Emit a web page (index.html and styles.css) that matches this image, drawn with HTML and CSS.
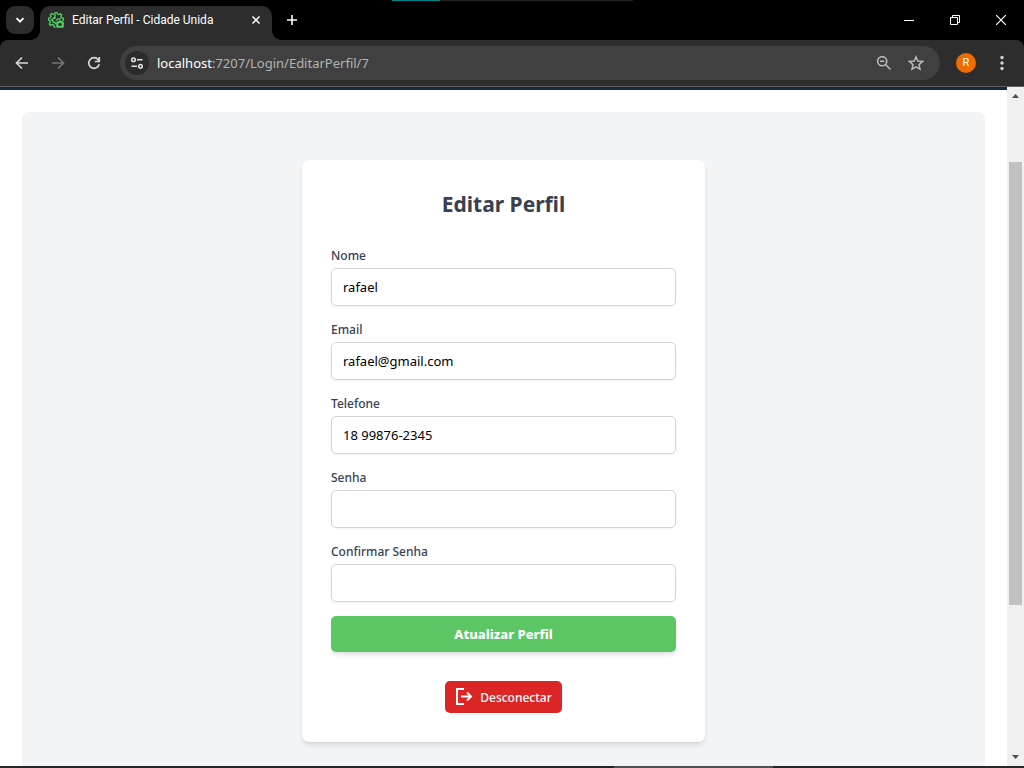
FILE: index.html
```html
<!DOCTYPE html>
<html lang="pt-BR">
<head>
<meta charset="utf-8">
<meta name="viewport" content="width=device-width, initial-scale=1">
<title>Editar Perfil - Cidade Unida</title>
<link rel="stylesheet" href="styles.css">
</head>
<body>
<div class="browser">
  <div class="edge-strip"></div>
  <header class="tabbar">
    <button class="tab-search" type="button" aria-label="Pesquisar guias">
      <svg width="12" height="12" viewBox="0 0 12 12"><path d="M2.5 4.200 6 7.700 9.500 4.200" fill="none" stroke="#fff" stroke-width="1.800"/></svg>
    </button>
    <div class="tab">
      <svg class="favicon" width="16" height="16" viewBox="0 0 16 16" fill="none" stroke="#57cf63" stroke-width="1.300" stroke-linejoin="round">
        <path d="M7.500 15H6l-.4-2-1.400-.6-1.900.9-1-1.300 1-1.700L2 9 .6 8V6.200L2.300 5.700 3 4.500 2.300 2.700 3.800 1.500l1.700 1L6.600 2 7.200.6h1.700L9.500 2l1.300.6 1.600-.9 1.300 1.200-.8 1.700.6 1.100 1.900.5v1.700L14 8.600"/>
        <path d="M7.600 2.600 6.800 4.400 7.400 6H5.200L4.600 8H2.400M5 8.300v2h2.200v2.200M9.300 6.200l1.500 1 2.200-.6M8 8.600l1.500-1.200"/>
        <path d="M9.200 10.400h1.500l.5-.8h1.600l.5.800h1.500v4.400H9.200z" stroke-width="2"/>
      </svg>
      <span class="tab-title">Editar Perfil - Cidade Unida</span>
      <button class="tab-close" type="button" aria-label="Fechar guia">
        <svg width="10" height="10" viewBox="0 0 10 10"><path d="M1.500 1.500l7 7M8.500 1.500l-7 7" stroke="#fff" stroke-width="1.500"/></svg>
      </button>
    </div>
    <button class="new-tab" type="button" aria-label="Nova guia">
      <svg width="12" height="12" viewBox="0 0 12 12"><path d="M6 1v10M1 6h10" stroke="#fff" stroke-width="1.600"/></svg>
    </button>
    <div class="window-controls">
      <button type="button" aria-label="Minimizar"><svg width="10" height="10" viewBox="0 0 10 10"><path d="M0 5.500h10" stroke="#fff"/></svg></button>
      <button type="button" aria-label="Restaurar"><svg width="10" height="10" viewBox="0 0 10 10" fill="none" stroke="#fff"><path d="M.5 2.500h7v7h-7zM2.500 2.500v-2h7v7h-2"/></svg></button>
      <button type="button" aria-label="Fechar"><svg width="10" height="10" viewBox="0 0 10 10"><path d="M0 0l10 10M10 0L0 10" stroke="#fff" stroke-width="1.200"/></svg></button>
    </div>
  </header>

  <nav class="toolbar" aria-label="Navegação">
    <button class="tool" type="button" aria-label="Voltar"><svg width="14" height="14" viewBox="0 0 14 14" fill="none" stroke="#d6d6d6" stroke-width="1.700"><path d="M13 7H2M7 1.500 1.500 7 7 12.500"/></svg></button>
    <button class="tool" type="button" aria-label="Avançar"><svg width="14" height="14" viewBox="0 0 14 14" fill="none" stroke="#777" stroke-width="1.700"><path d="M1 7h11M7 1.500 12.500 7 7 12.500"/></svg></button>
    <button class="tool" type="button" aria-label="Recarregar"><svg width="14" height="14" viewBox="0 0 14 14" fill="none" stroke="#d6d6d6" stroke-width="1.700"><path d="M12.200 8.200A5.300 5.300 0 1 1 11.200 3.700L12 5M12.300 1v4.500H7.800"/></svg></button>
    <div class="address">
      <button class="site-info" type="button" aria-label="Informações do site">
        <svg width="14" height="14" viewBox="0 0 14 14" fill="none" stroke="#e3e3e3" stroke-width="1.500"><circle cx="3.500" cy="3.800" r="1.800"/><path d="M7 3.800h5.500M1.500 10.200H7"/><circle cx="10.500" cy="10.200" r="1.800"/></svg>
      </button>
      <div class="url" role="textbox" aria-label="Endereço" tabindex="0"><span class="host">localhost</span>:7207/Login/EditarPerfil/7</div>
      <button class="address-action" type="button" aria-label="Zoom">
        <svg width="16" height="16" viewBox="0 0 16 16" fill="none" stroke="#b8b8b8" stroke-width="1.600"><circle cx="6.200" cy="6.200" r="4.600"/><path d="M9.500 9.500l5 5M4 6.200h4.400"/></svg>
      </button>
      <button class="address-action" type="button" aria-label="Adicionar aos favoritos">
        <svg width="16" height="16" viewBox="0 0 16 16" fill="none" stroke="#b8b8b8" stroke-width="1.500"><path d="M8 1.800l1.800 4.300 4.700.4L11 9.600l1 4.600-4-2.400-4 2.400 1-4.600L1.500 6.500l4.700-.4z"/></svg>
      </button>
    </div>
    <button class="tool" type="button" aria-label="Perfil R"><span class="avatar">R</span></button>
    <button class="tool" type="button" aria-label="Menu"><svg width="4" height="16" viewBox="0 0 4 16" fill="#d6d6d6"><circle cx="2" cy="2.500" r="1.700"/><circle cx="2" cy="8" r="1.700"/><circle cx="2" cy="13.500" r="1.700"/></svg></button>
  </nav>

  <div class="viewport">
    <main class="page">
      <section class="panel">
        <div class="card">
          <h1 class="title">Editar Perfil</h1>
          <form class="form">
            <div class="field">
              <label for="nome">Nome</label>
              <input id="nome" type="text" value="rafael">
            </div>
            <div class="field">
              <label for="email">Email</label>
              <input id="email" type="email" value="rafael@gmail.com">
            </div>
            <div class="field">
              <label for="telefone">Telefone</label>
              <input id="telefone" type="tel" value="18 99876-2345">
            </div>
            <div class="field">
              <label for="senha">Senha</label>
              <input id="senha" type="password">
            </div>
            <div class="field">
              <label for="confirmar">Confirmar Senha</label>
              <input id="confirmar" type="password">
            </div>
            <button class="submit" type="submit">Atualizar Perfil</button>
          </form>
          <button class="logout" type="button">
            <svg width="18" height="18" viewBox="0 0 18 18" fill="none" stroke="#fff" stroke-width="2"><path d="M9 1H2v15h7M6 8.500h10M12 4.500l4 4-4 4"/></svg>
            Desconectar
          </button>
        </div>
      </section>
    </main>
    <div class="scrollbar" aria-hidden="true">
      <svg class="arrow" width="17" height="17" viewBox="0 0 17 17"><path d="M5 11h7L8.500 7z" fill="#505050"/></svg>
      <div class="track">
        <div class="track-before"></div>
        <div class="thumb"></div>
        <div class="track-after"></div>
      </div>
      <svg class="arrow" width="17" height="17" viewBox="0 0 17 17"><path d="M5 6h7l-3.500 4z" fill="#505050"/></svg>
    </div>
  </div>
  <div class="taskbar-edge"></div>
</div>
</body>
</html>
```

FILE: styles.css
```css
* {
  box-sizing: border-box;
}

body {
  margin: 0;
  font-family: "Noto Sans", "Open Sans", sans-serif;
  background: #000;
}

button {
  display: flex;
  align-items: center;
  justify-content: center;
  margin: 0;
  padding: 0;
  border: 0;
  background: none;
  font-family: inherit;
  cursor: pointer;
}

svg {
  display: block;
  flex: none;
}

.browser {
  position: relative;
  display: flex;
  flex-direction: column;
  height: 100vh;
  overflow: hidden;
}

.edge-strip {
  position: absolute;
  top: 0;
  left: 392px;
  width: 241px;
  height: 1px;
  background: linear-gradient(90deg, #008489 20%, #222 20%);
}

/* Tab bar */
.tabbar {
  display: flex;
  flex: none;
  align-items: center;
  height: 40px;
  padding-left: 6px;
}

.tab-search {
  width: 28px;
  height: 28px;
  margin-right: 6px;
  border-radius: 9px;
  background: #2d2d2d;
}

.tab {
  position: relative;
  display: flex;
  align-items: center;
  align-self: flex-end;
  gap: 8px;
  width: 232px;
  height: 34px;
  padding: 0 8px 6px;
  border-radius: 10px 10px 0 0;
  background: #2d2d2d;
}

.tab::before,
.tab::after {
  content: "";
  position: absolute;
  bottom: 0;
  width: 10px;
  height: 10px;
}

.tab::before {
  right: 100%;
  background: radial-gradient(circle at 0 0, transparent 10px, #2d2d2d 10px);
}

.tab::after {
  left: 100%;
  background: radial-gradient(circle at 100% 0, transparent 10px, #2d2d2d 10px);
}

.tab-title {
  flex: 1;
  color: #fff;
  font-family: Roboto, "Noto Sans", sans-serif;
  font-size: 12px;
  line-height: 18px;
  white-space: nowrap;
}

.tab-close {
  width: 16px;
  height: 16px;
}

.new-tab {
  width: 28px;
  height: 28px;
  margin-left: 6px;
}

.window-controls {
  display: flex;
  margin-left: auto;
}

.window-controls button {
  width: 46px;
  height: 40px;
}

/* Toolbar */
.toolbar {
  display: flex;
  flex: none;
  align-items: center;
  height: 47px;
  padding: 0 4px;
  border-bottom: 1px solid #606060;
  border-radius: 8px 8px 0 0;
  background: #2d2d2d;
}

.tool {
  flex: none;
  width: 36px;
  height: 34px;
}

.address {
  display: flex;
  flex: 1;
  align-items: center;
  height: 34px;
  margin: 0 8px;
  padding: 0 8px 0 5px;
  border-radius: 17px;
  background: #404040;
}

.site-info {
  width: 24px;
  height: 24px;
  margin-right: 8px;
  border-radius: 50%;
  background: #2b2b2b;
}

.url {
  flex: 1;
  color: #b4b4b4;
  font-size: 13px;
  line-height: 20px;
  white-space: nowrap;
}

.host {
  color: #fff;
}

.address-action {
  width: 32px;
  height: 32px;
}

.avatar {
  width: 20px;
  height: 20px;
  border-radius: 50%;
  background: #ef6c00;
  color: #fff;
  font-family: Roboto, sans-serif;
  font-size: 11px;
  line-height: 20px;
  text-align: center;
}

/* Page */
.viewport {
  display: flex;
  flex: 1;
  min-height: 0;
}

.page {
  flex: 1;
  padding: 22px;
  border-top: 3px solid #122a3f;
  overflow: hidden;
  background: #fff;
}

.panel {
  display: flex;
  justify-content: center;
  padding: 48px 16px;
  border-radius: 7px;
  background: #f3f4f6;
}

.card {
  display: flex;
  flex-direction: column;
  align-items: center;
  width: 100%;
  max-width: 403px;
  padding: 29px;
  border-radius: 7px;
  background: #fff;
  box-shadow: 0 4px 5px -1px rgba(0, 0, 0, 0.1), 0 2px 3px -2px rgba(0, 0, 0, 0.1);
}

.title {
  margin: 0 0 28px;
  color: #374151;
  font-size: 21px;
  font-weight: 700;
  line-height: 30px;
}

.form {
  display: flex;
  flex-direction: column;
  gap: 14px;
  width: 100%;
  margin-bottom: 29px;
}

.field {
  display: flex;
  flex-direction: column;
  gap: 3px;
}

.field label {
  color: #374151;
  font-size: 12px;
  font-weight: 500;
  line-height: 18px;
}

.field + .field {
  margin-top: 1px;
}

.field input {
  width: 100%;
  height: 38px;
  padding: 0 11px;
  border: 1px solid #d1d5db;
  border-radius: 5px;
  background: #fff;
  box-shadow: 0 1px 2px rgba(0, 0, 0, 0.05);
  color: #000;
  font-family: inherit;
  font-size: 13px;
}

.submit {
  height: 36px;
  border-radius: 5px;
  background: #5cc664;
  box-shadow: 0 4px 5px -1px rgba(0, 0, 0, 0.1), 0 2px 3px -2px rgba(0, 0, 0, 0.1);
  color: #fff;
  font-size: 13px;
  font-weight: 800;
}

.logout {
  gap: 7px;
  height: 32px;
  padding: 0 10px;
  border-radius: 5px;
  background: #dc2626;
  color: #fff;
  font-size: 12px;
  font-weight: 500;
}

/* Scrollbar */
.scrollbar {
  display: flex;
  flex: none;
  flex-direction: column;
  width: 17px;
  background: #f0f0f0;
}

.track {
  display: flex;
  flex: 1;
  flex-direction: column;
  padding: 0 2px;
}

.track-before {
  flex: 58;
}

.thumb {
  flex: 443;
  background: #c1c1c1;
}

.track-after {
  flex: 144;
}

.taskbar-edge {
  flex: none;
  height: 2px;
  background: linear-gradient(90deg, #24262a 60%, #505254 60%, #505254 75.5%, #24262a 75.5%);
}
```
